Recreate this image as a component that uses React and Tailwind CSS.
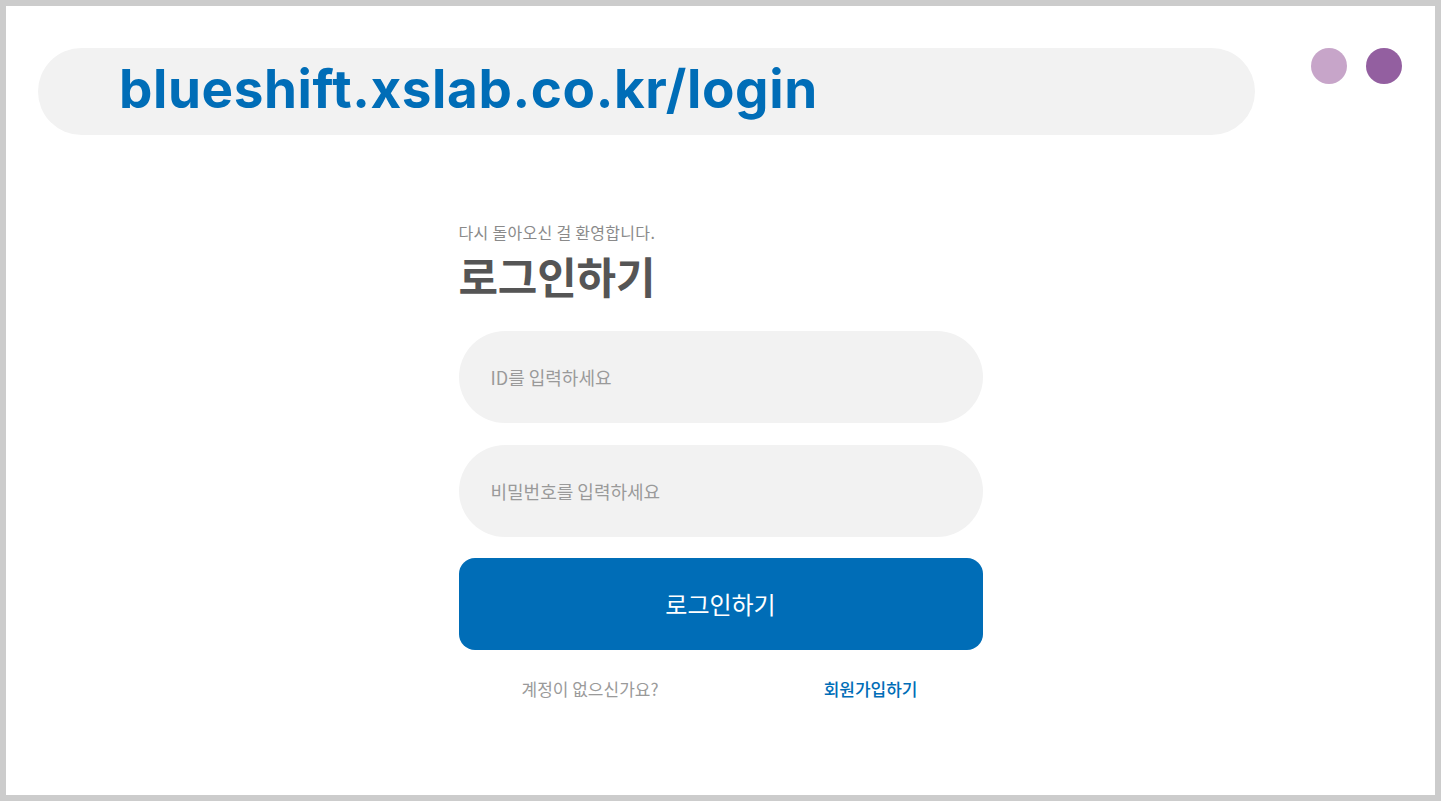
import React from 'react';

const kr = { fontFamily: '"Noto Sans CJK KR", "Noto Sans", sans-serif' };

function AddressBar() {
  return (
    <div className="flex items-start pt-[42px] pl-[32px] pr-[32px]">
      <div className="flex h-[87px] w-[1217px] items-center rounded-full bg-[#f2f2f2] pb-[4px] pl-[81px]">
        <span
          className="text-[53px] font-bold leading-none tracking-[0.6px] text-[#006db7]"
          style={{ fontFamily: 'Inter, "Noto Sans", sans-serif' }}
        >
          blueshift.xslab.co.kr/login
        </span>
      </div>
      <div className="ml-[56px] flex gap-[19px]">
        <span className="block h-[36px] w-[36px] rounded-full bg-[#c7a5c9]" />
        <span className="block h-[36px] w-[36px] rounded-full bg-[#935fa0]" />
      </div>
    </div>
  );
}

function LoginForm() {
  return (
    <div className="mx-auto mt-[86px] w-[524px]" style={kr}>
      <p className="text-[16px] leading-[22px] tracking-[0.3px] text-[#8a8a8a]">다시 돌아오신 걸 환영합니다.</p>
      <h1 className="mt-[6px] text-[43px] font-bold leading-[52px] tracking-[-0.2px] text-[#555555]">로그인하기</h1>
      <div className="mt-[30px] flex flex-col gap-[22px]">
        <input
          className="h-[92px] w-full rounded-full bg-[#f2f2f2] px-[32px] text-[18px] text-[#555] placeholder-[#9a9a9a] outline-none"
          placeholder="ID를 입력하세요"
          style={kr}
        />
        <input
          type="password"
          className="h-[92px] w-full rounded-full bg-[#f2f2f2] px-[32px] text-[18px] text-[#555] placeholder-[#9a9a9a] outline-none"
          placeholder="비밀번호를 입력하세요"
          style={kr}
        />
      </div>
      <button
        className="mt-[21px] flex h-[92px] w-full items-center justify-center rounded-[16px] bg-[#006db7] text-[24px] text-white"
        style={kr}
      >
        로그인하기
      </button>
      <div className="mt-[26px] flex justify-between pl-[63px] pr-[65px] text-[17px] leading-[26px]">
        <span className="text-[#9a9a9a]">계정이 없으신가요?</span>
        <a href="#" className="font-medium text-[#006db7]">회원가입하기</a>
      </div>
    </div>
  );
}

export default function App() {
  return (
    <div className="h-[801px] w-[1441px] overflow-hidden border-[6px] border-[#cccccc] bg-white">
      <AddressBar />
      <LoginForm />
    </div>
  );
}
